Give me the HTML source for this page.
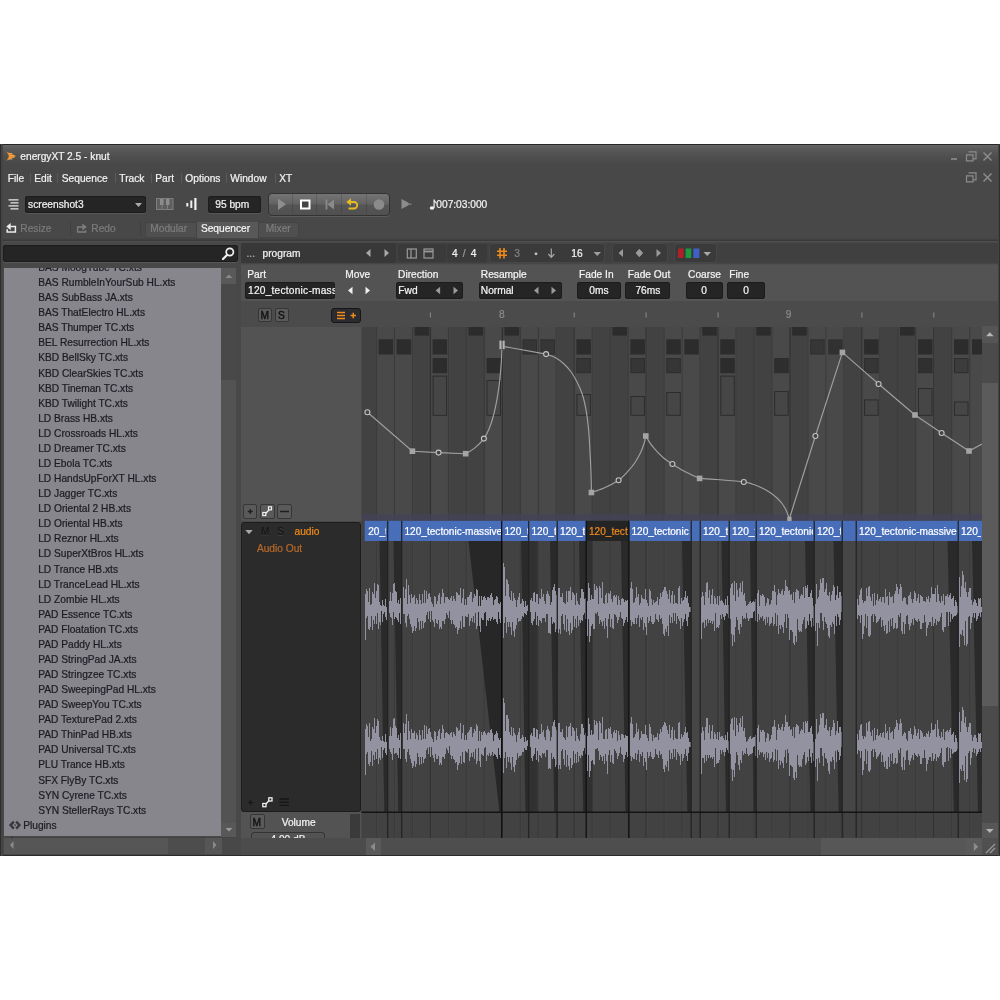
<!DOCTYPE html><html><head><meta charset="utf-8"><title>energyXT 2.5 - knut</title><style>
html,body{margin:0;padding:0;background:#fff;}
body{width:1000px;height:1000px;position:relative;overflow:hidden;font-family:"Liberation Sans",sans-serif;font-size:10.2px;}
div{position:absolute;box-sizing:border-box;}
.t{position:absolute;white-space:nowrap;line-height:12px;-webkit-text-stroke:.22px;}
svg{position:absolute;left:0;top:0;overflow:visible;}
.in{background:#252525;border-radius:3px;box-shadow:0 1px 0 #585858,0 0 0 1px #1c1c1c inset;}
.btn{background:#5a5a5a;border:1px solid #363636;border-radius:2px;}
</style></head><body>
<div id="w" style="left:0;top:0;width:1000px;height:1000px;will-change:transform"><div style="left:0px;top:144px;width:1000px;height:712.2px;background:#484848;"></div>
<div style="left:2px;top:145px;width:996px;height:23px;background:linear-gradient(#666 0,#5a5a5a 4px,#4f4f4f 11px,#484848 20px);"></div>
<div style="left:0px;top:144px;width:1000px;height:1px;background:#262626;"></div>
<div style="left:0px;top:854.8px;width:1000px;height:1.4px;background:#2b2b2b;"></div>
<div style="left:0px;top:144px;width:3px;height:711.7px;background:linear-gradient(90deg,#2e2e2e 0,#2e2e2e 1.2px,#444 1.3px,#444 100%);"></div>
<div style="left:997.5px;top:144px;width:2.5px;height:711.7px;background:linear-gradient(90deg,#444 0,#444 1.2px,#2e2e2e 1.3px,#2e2e2e 100%);"></div>
<span class="t" style="left:20.3px;top:150.8px;color:#f2f2f2;">energyXT 2.5 - knut</span>
<span class="t" style="left:7.8px;top:172.8px;color:#f2f2f2;">File</span>
<span class="t" style="left:34.3px;top:172.8px;color:#f2f2f2;">Edit</span>
<span class="t" style="left:61.8px;top:172.8px;color:#f2f2f2;">Sequence</span>
<span class="t" style="left:119.3px;top:172.8px;color:#f2f2f2;">Track</span>
<span class="t" style="left:155.3px;top:172.8px;color:#f2f2f2;">Part</span>
<span class="t" style="left:185.3px;top:172.8px;color:#f2f2f2;">Options</span>
<span class="t" style="left:230.3px;top:172.8px;color:#f2f2f2;">Window</span>
<span class="t" style="left:279.3px;top:172.8px;color:#f2f2f2;">XT</span>
<div style="left:29.5px;top:173px;width:1px;height:10px;background:#5a5a5a;"></div>
<div style="left:56.5px;top:173px;width:1px;height:10px;background:#5a5a5a;"></div>
<div style="left:114.5px;top:173px;width:1px;height:10px;background:#5a5a5a;"></div>
<div style="left:150.5px;top:173px;width:1px;height:10px;background:#5a5a5a;"></div>
<div style="left:180.5px;top:173px;width:1px;height:10px;background:#5a5a5a;"></div>
<div style="left:225.5px;top:173px;width:1px;height:10px;background:#5a5a5a;"></div>
<div style="left:274.5px;top:173px;width:1px;height:10px;background:#5a5a5a;"></div>
<div class="in" style="left:25px;top:196px;width:121px;height:16.5px;"></div>
<span class="t" style="left:28.1px;top:198.8px;color:#f2f2f2;">screenshot3</span>
<div class="in" style="left:208px;top:196px;width:53px;height:16.5px;"></div>
<span class="t" style="left:182.3px;top:198.8px;width:100px;text-align:center;color:#f0f0f0;">95 bpm</span>
<div style="left:268px;top:192.5px;width:122px;height:23px;border-radius:4px;border:1px solid #333;background:linear-gradient(#747474 0%,#636363 48%,#555 52%,#505050 100%);box-shadow:0 1px 0 #5c5c5c;"></div>
<div style="left:291.5px;top:194px;width:1px;height:20px;background:rgba(40,40,40,.22);"></div>
<div style="left:316px;top:194px;width:1px;height:20px;background:rgba(40,40,40,.22);"></div>
<div style="left:341px;top:194px;width:1px;height:20px;background:rgba(40,40,40,.22);"></div>
<div style="left:365.5px;top:194px;width:1px;height:20px;background:rgba(40,40,40,.22);"></div>
<span class="t" style="left:436.3px;top:198.8px;color:#f2f2f2;">007:03:000</span>
<span class="t" style="left:20.3px;top:222.8px;color:#7b7b7b;">Resize</span>
<div style="left:69.5px;top:222px;width:1px;height:14px;background:#404040;"></div>
<span class="t" style="left:91.3px;top:222.8px;color:#7b7b7b;">Redo</span>
<div style="left:139.5px;top:222px;width:1px;height:14px;background:#404040;"></div>
<div style="left:145px;top:221.5px;width:52px;height:16px;background:#4f4f4f;border:1px solid #444;border-radius:2px 0 0 2px;"></div>
<div style="left:197px;top:221.5px;width:60.5px;height:16px;background:#585858;"></div>
<div style="left:257.5px;top:221.5px;width:41.5px;height:16px;background:#4f4f4f;border:1px solid #444;border-radius:0 2px 2px 0;"></div>
<span class="t" style="left:150.3px;top:222.8px;color:#7d7d7d;">Modular</span>
<span class="t" style="left:200.9px;top:222.8px;color:#f4f4f4;">Sequencer</span>
<span class="t" style="left:265.8px;top:222.8px;color:#7d7d7d;">Mixer</span>
<div style="left:3px;top:238px;width:994.5px;height:3px;background:linear-gradient(#484848,#383838);"></div>
<div style="left:3px;top:241px;width:994.5px;height:1px;background:#4e4e4e;"></div>
<div class="in" style="left:3px;top:245px;width:234.5px;height:16.5px;"></div>
<div style="left:3.5px;top:267.6px;width:217.2px;height:568.9px;background:#87868d;overflow:hidden;"><span class="t" style="left:34.7px;top:-5.8px;color:#1c1c22;font-size:10.2px">BAS MoogTube TC.xts</span><span class="t" style="left:34.7px;top:9.2px;color:#1c1c22;font-size:10.2px">BAS RumbleInYourSub HL.xts</span><span class="t" style="left:34.7px;top:24.2px;color:#1c1c22;font-size:10.2px">BAS SubBass JA.xts</span><span class="t" style="left:34.7px;top:39.2px;color:#1c1c22;font-size:10.2px">BAS ThatElectro HL.xts</span><span class="t" style="left:34.7px;top:54.2px;color:#1c1c22;font-size:10.2px">BAS Thumper TC.xts</span><span class="t" style="left:34.7px;top:69.2px;color:#1c1c22;font-size:10.2px">BEL Resurrection HL.xts</span><span class="t" style="left:34.7px;top:84.2px;color:#1c1c22;font-size:10.2px">KBD BellSky TC.xts</span><span class="t" style="left:34.7px;top:100.2px;color:#1c1c22;font-size:10.2px">KBD ClearSkies TC.xts</span><span class="t" style="left:34.7px;top:115.2px;color:#1c1c22;font-size:10.2px">KBD Tineman TC.xts</span><span class="t" style="left:34.7px;top:130.2px;color:#1c1c22;font-size:10.2px">KBD Twilight TC.xts</span><span class="t" style="left:34.7px;top:145.2px;color:#1c1c22;font-size:10.2px">LD Brass HB.xts</span><span class="t" style="left:34.7px;top:160.2px;color:#1c1c22;font-size:10.2px">LD Crossroads HL.xts</span><span class="t" style="left:34.7px;top:175.2px;color:#1c1c22;font-size:10.2px">LD Dreamer TC.xts</span><span class="t" style="left:34.7px;top:190.2px;color:#1c1c22;font-size:10.2px">LD Ebola TC.xts</span><span class="t" style="left:34.7px;top:205.2px;color:#1c1c22;font-size:10.2px">LD HandsUpForXT HL.xts</span><span class="t" style="left:34.7px;top:220.2px;color:#1c1c22;font-size:10.2px">LD Jagger TC.xts</span><span class="t" style="left:34.7px;top:235.2px;color:#1c1c22;font-size:10.2px">LD Oriental 2 HB.xts</span><span class="t" style="left:34.7px;top:250.2px;color:#1c1c22;font-size:10.2px">LD Oriental HB.xts</span><span class="t" style="left:34.7px;top:265.2px;color:#1c1c22;font-size:10.2px">LD Reznor HL.xts</span><span class="t" style="left:34.7px;top:280.2px;color:#1c1c22;font-size:10.2px">LD SuperXtBros HL.xts</span><span class="t" style="left:34.7px;top:296.2px;color:#1c1c22;font-size:10.2px">LD Trance HB.xts</span><span class="t" style="left:34.7px;top:311.2px;color:#1c1c22;font-size:10.2px">LD TranceLead HL.xts</span><span class="t" style="left:34.7px;top:326.2px;color:#1c1c22;font-size:10.2px">LD Zombie HL.xts</span><span class="t" style="left:34.7px;top:341.2px;color:#1c1c22;font-size:10.2px">PAD Essence TC.xts</span><span class="t" style="left:34.7px;top:356.2px;color:#1c1c22;font-size:10.2px">PAD Floatation TC.xts</span><span class="t" style="left:34.7px;top:371.2px;color:#1c1c22;font-size:10.2px">PAD Paddy HL.xts</span><span class="t" style="left:34.7px;top:386.2px;color:#1c1c22;font-size:10.2px">PAD StringPad JA.xts</span><span class="t" style="left:34.7px;top:401.2px;color:#1c1c22;font-size:10.2px">PAD Stringzee TC.xts</span><span class="t" style="left:34.7px;top:416.2px;color:#1c1c22;font-size:10.2px">PAD SweepingPad HL.xts</span><span class="t" style="left:34.7px;top:431.2px;color:#1c1c22;font-size:10.2px">PAD SweepYou TC.xts</span><span class="t" style="left:34.7px;top:446.2px;color:#1c1c22;font-size:10.2px">PAD TexturePad 2.xts</span><span class="t" style="left:34.7px;top:461.2px;color:#1c1c22;font-size:10.2px">PAD ThinPad HB.xts</span><span class="t" style="left:34.7px;top:476.2px;color:#1c1c22;font-size:10.2px">PAD Universal TC.xts</span><span class="t" style="left:34.7px;top:491.2px;color:#1c1c22;font-size:10.2px">PLU Trance HB.xts</span><span class="t" style="left:34.7px;top:507.2px;color:#1c1c22;font-size:10.2px">SFX FlyBy TC.xts</span><span class="t" style="left:34.7px;top:522.2px;color:#1c1c22;font-size:10.2px">SYN Cyrene TC.xts</span><span class="t" style="left:34.7px;top:537.2px;color:#1c1c22;font-size:10.2px">SYN StellerRays TC.xts</span><span class="t" style="left:19.7px;top:552.2px;color:#1c1c22;font-size:10.2px">Plugins</span></div>
<div style="left:221.2px;top:268px;width:15.3px;height:568.5px;background:#535353;"></div>
<div style="left:221.2px;top:268px;width:15.3px;height:15.5px;background:#595959;"></div>
<div style="left:221.2px;top:284px;width:15.3px;height:95.5px;background:#494949;"></div>
<div style="left:221.2px;top:822.5px;width:15.3px;height:14px;background:#585858;"></div>
<div style="left:3.5px;top:837px;width:218px;height:17.3px;background:#565656;"></div>
<div style="left:168px;top:837px;width:37px;height:17.3px;background:#4d4d4d;"></div>
<div style="left:3.5px;top:836.5px;width:233px;height:1px;background:#444;"></div>
<div style="left:241px;top:242.6px;width:756.5px;height:20.4px;background:#404040;"></div>
<div style="left:241px;top:243.3px;width:155px;height:19.3px;background:#383838;border-radius:2px;"></div>
<div style="left:398px;top:244px;width:48px;height:18.3px;background:#3a3a3a;border-radius:3px;"></div>
<div style="left:447px;top:244px;width:40px;height:18.3px;background:#3a3a3a;border-radius:3px;"></div>
<div style="left:490px;top:244px;width:114px;height:18.3px;background:#3a3a3a;border-radius:3px;box-shadow:0 0 0 1px #474747;"></div>
<div style="left:612.5px;top:244px;width:54px;height:18.3px;background:#3a3a3a;border-radius:3px;box-shadow:0 0 0 1px #474747;"></div>
<div style="left:675px;top:244px;width:40.5px;height:18.3px;background:#3a3a3a;border-radius:3px;box-shadow:0 0 0 1px #474747;"></div>
<span class="t" style="left:246.5px;top:247.8px;color:#b0b0b0;">...</span>
<span class="t" style="left:262.5px;top:247.8px;color:#f2f2f2;">program</span>
<span class="t" style="left:452px;top:247.8px;color:#f2f2f2;">4</span>
<span class="t" style="left:462.8px;top:247.8px;color:#9a9a9a;">/</span>
<span class="t" style="left:470.8px;top:247.8px;color:#f2f2f2;">4</span>
<span class="t" style="left:514.3px;top:247.8px;color:#808080;">3</span>
<span class="t" style="left:571.3px;top:247.8px;color:#f2f2f2;">16</span>
<div style="left:241px;top:263px;width:756.5px;height:38.5px;background:#535353;"></div>
<div style="left:241px;top:262.5px;width:756.5px;height:2.5px;background:linear-gradient(#424242,#535353);"></div>
<span class="t" style="left:247.3px;top:268.8px;color:#f4f4f4;">Part</span>
<span class="t" style="left:345.3px;top:268.8px;color:#f4f4f4;">Move</span>
<span class="t" style="left:398.1px;top:268.8px;color:#f4f4f4;">Direction</span>
<span class="t" style="left:480.8px;top:268.8px;color:#f4f4f4;">Resample</span>
<span class="t" style="left:579px;top:268.8px;color:#f4f4f4;">Fade In</span>
<span class="t" style="left:627.8px;top:268.8px;color:#f4f4f4;">Fade Out</span>
<span class="t" style="left:688.1px;top:268.8px;color:#f4f4f4;">Coarse</span>
<span class="t" style="left:729.3px;top:268.8px;color:#f4f4f4;">Fine</span>
<div class="in" style="left:245.3px;top:281.5px;width:89.7px;height:17px;"></div>
<div style="left:247.500px;top:282px;width:87px;height:15px;overflow:hidden"><span class="t" style="left:.5px;top:2.800px;color:#f4f4f4;letter-spacing:.22px">120_tectonic-massive</span></div>
<div class="in" style="left:395.6px;top:281.5px;width:67.7px;height:17px;"></div>
<span class="t" style="left:398.3px;top:284.8px;color:#f4f4f4;">Fwd</span>
<div class="in" style="left:478.5px;top:281.5px;width:83px;height:17px;"></div>
<span class="t" style="left:480.8px;top:284.8px;color:#f4f4f4;">Normal</span>
<div class="in" style="left:576.5px;top:281.5px;width:44.8px;height:17px;"></div>
<span class="t" style="left:548.9px;top:284.8px;width:100px;text-align:center;color:#f4f4f4;">0ms</span>
<div class="in" style="left:625.3px;top:281.5px;width:45.1px;height:17px;"></div>
<span class="t" style="left:597.9px;top:284.8px;width:100px;text-align:center;color:#f4f4f4;">76ms</span>
<div class="in" style="left:685.6px;top:281.5px;width:37.1px;height:17px;"></div>
<span class="t" style="left:654.2px;top:284.8px;width:100px;text-align:center;color:#f4f4f4;">0</span>
<div class="in" style="left:727.2px;top:281.5px;width:37.6px;height:17px;"></div>
<span class="t" style="left:696px;top:284.8px;width:100px;text-align:center;color:#f4f4f4;">0</span>
<div style="left:241px;top:301px;width:120.5px;height:220px;background:#535353;"></div>
<div style="left:241px;top:301px;width:756.5px;height:25.7px;background:#4b4b4b;"></div>
<div class="btn" style="left:258.4px;top:308.4px;width:14px;height:14px;"></div>
<div class="btn" style="left:275px;top:308.4px;width:14px;height:14px;"></div>
<span class="t" style="left:260.5px;top:309.8px;color:#141414;-webkit-text-stroke:.45px;">M</span>
<span class="t" style="left:278px;top:309.8px;color:#141414;-webkit-text-stroke:.45px;">S</span>
<div style="left:331.3px;top:307.8px;width:30px;height:15px;background:#2b2b30;border-radius:3px;border:1.2px solid #161616;"></div>
<span class="t" style="left:451.8px;top:308.8px;width:100px;text-align:center;color:#8a8a8a;">8</span>
<span class="t" style="left:738.5px;top:308.8px;width:100px;text-align:center;color:#8a8a8a;">9</span>
<div class="btn" style="left:243.2px;top:504.4px;width:14.3px;height:14.3px;"></div>
<div class="btn" style="left:260.3px;top:504.4px;width:14.3px;height:14.3px;"></div>
<div class="btn" style="left:277.3px;top:504.4px;width:14.3px;height:14.3px;"></div>
<div style="left:241px;top:521.7px;width:120.2px;height:290px;background:#2b2b2b;border-radius:3px;border:1px solid #1c1c1c;"></div>
<span class="t" style="left:260.9px;top:525.8px;color:#151515;text-shadow:0 1px 0 #444;">M</span>
<span class="t" style="left:277.3px;top:525.8px;color:#151515;text-shadow:0 1px 0 #444;">S</span>
<span class="t" style="left:294.5px;top:525.8px;color:#ef8a1c;">audio</span>
<span class="t" style="left:256.9px;top:542.8px;color:#b4692a;">Audio Out</span>
<div style="left:241px;top:812px;width:120.5px;height:26.4px;background:#535353;overflow:hidden;"><div class="btn" style="left:9.400px;top:2.400px;width:15px;height:14.600px"></div><div style="left:9.700px;top:19.500px;width:74.600px;height:14px;background:#535353;border:1px solid #333;border-radius:3px"></div><span class="t" style="left:27px;top:22.300px;width:40px;text-align:center;color:#f4f4f4">4.00 dB</span><div style="left:108.600px;top:2.400px;width:10.400px;height:24px;background:#3a3a3a"></div></div>
<span class="t" style="left:252.6px;top:816.8px;color:#141414;-webkit-text-stroke:.45px;">M</span>
<span class="t" style="left:281.7px;top:816.8px;color:#f4f4f4;">Volume</span>
<div style="left:982px;top:327px;width:15.5px;height:511px;background:#4b4b4b;"></div>
<div style="left:982px;top:326px;width:15.5px;height:17px;background:#555;"></div>
<div style="left:982px;top:383px;width:15.5px;height:323px;background:#5b5b5b;"></div>
<div style="left:982px;top:823px;width:15.5px;height:15px;background:#575757;"></div>
<div style="left:241px;top:838.4px;width:756.5px;height:16.3px;background:#4c4c4c;"></div>
<div style="left:365.5px;top:838.4px;width:15px;height:16.3px;background:#5a5a5a;"></div>
<div style="left:380.5px;top:838.4px;width:586px;height:16.3px;background:#4e4e4e;"></div>
<div style="left:821px;top:838.4px;width:145px;height:16.3px;background:#575757;"></div>
<div style="left:966px;top:838.4px;width:16px;height:16.3px;background:#5a5a5a;"></div>
<div style="left:982px;top:838.4px;width:15.5px;height:16.3px;background:#505050;"></div>
<svg width="1000" height="1000" viewBox="0 0 1000 1000"><path d="M6.500 151.600L16.200 156.200L6.500 160.800L8.800 156.200z" fill="#e07a18"/><path d="M8.300 153.600h4M9 155.400h5.500M9 157.200h5.500M8.300 159h4" stroke="#f8c070" stroke-width=".8"/>
<g stroke="#8c8c8c" fill="none" stroke-width="1.2"><path d="M951 159h6" stroke-width="1.6"/><path d="M968.5 151.8h7.5v7h-2.5M966.5 154.800h6.500v6h-6.500z"/><path d="M983.5 152.500l8 8m0-8l-8 8" stroke-width="1.5"/><path d="M968.5 172.800h7.500v7h-2.500M966.500 175.800h6.500v6h-6.500z"/><path d="M983.500 173.500l8 8m0-8l-8 8" stroke-width="1.500"/></g>
<g stroke="#e8e8e8" stroke-width="1.3"><path d="M8.500 199.800h10M10.500 202.800h8M8.500 205.800h10M10.500 208.800h8"/></g>
<path d="M135 203h7l-3.500 4z" fill="#aaa"/>
<g><rect x="156.500" y="198.500" width="16.500" height="11" fill="#5e5e5e" stroke="#7e7e7e"/><path d="M162 199v10.500M167.500 199v10.500" stroke="#7e7e7e"/><rect x="160" y="199" width="3.500" height="6" fill="#8c8c8c"/><rect x="166" y="199" width="3.500" height="6" fill="#8c8c8c"/></g>
<g fill="#f0f0f0"><rect x="186.300" y="203" width="2" height="3.500"/><rect x="190.300" y="200.500" width="2" height="7.500"/><rect x="194.300" y="198" width="2.200" height="12"/></g>
<path d="M278 198.500l8 5.800-8 5.800z" fill="#8e8e8e"/>
<rect x="301" y="200.500" width="8.500" height="8" fill="#444" stroke="#fff" stroke-width="2"/>
<path d="M326.500 199.500v10" stroke="#8a8a8a" stroke-width="1.800"/><path d="M334 199.500v10l-6.500-5z" fill="#8a8a8a"/>
<g stroke="#e9bb22" stroke-width="1.800" fill="none"><path d="M350 202h4a3.200 3.200 0 0 1 0 6.500h-5.500"/></g><path d="M346.300 202l4.700-3.700v7.400z" fill="#e9bb22"/>
<circle cx="379" cy="204.500" r="5.300" fill="#8a8a8a"/>
<path d="M401.500 199l7.500 4v2l-7.500 4z" fill="#8c8c8c"/><path d="M408 203.500h3.500v1.500h-3.500z" fill="#7a7a7a"/>
<g fill="#f0f0f0"><ellipse cx="432" cy="208" rx="2.300" ry="1.800"/><path d="M433.500 199.500h1.200v8.500h-1.200z"/><path d="M434 199.500c1 1.500 2.500 2 2.800 4l-.9.300c-.3-1.300-1.200-1.800-1.900-2z"/></g>
<g stroke="#ececec" stroke-width="1.500" fill="none"><path d="M10 226.600h5.400v5.300h-8.200v-2.600"/></g><path d="M6.300 226.600l4.400-3.600v7.200z" fill="#ececec"/>
<g stroke="#7e7e7e" stroke-width="1.400" fill="none"><path d="M80.500 227h-2.900v5h8v-1.800M80 227h3"/></g><path d="M82.400 223.600l4.300 3.400-4.300 3.400z" fill="#7e7e7e"/>
<g stroke="#f2f2f2" fill="none"><circle cx="229.800" cy="252" r="3.600" stroke-width="1.700"/><path d="M227 255l-4 4" stroke-width="2.200" stroke-linecap="round"/></g>
<g stroke="#37373d" stroke-width="2.300" fill="none"><path d="M13.800 821.600l-3.300 3.500 3.300 3.500M16.200 821.600l3.300 3.500-3.300 3.500"/></g><circle cx="15" cy="825.100" r="1.100" fill="#55555c"/>
<g stroke="#3a3a42" stroke-width="1.600" fill="none"><path d="M13 836.500l-2 2"/></g>
<path d="M225.500 278l3.500-3.500 3.500 3.500z" fill="#8a8a8a"/><path d="M225.500 828l3.500 3.500 3.500-3.500z" fill="#9a9a9a"/>
<path d="M13.500 841l-3.500 4 3.500 4z" fill="#8a8a8a"/><path d="M213 841l3.500 4-3.500 4z" fill="#8a8a8a"/>
<path d="M366 253l4.5 -4v8z" fill="#a8a8a8"/>
<path d="M389 253l-4.5 -4v8z" fill="#a8a8a8"/>
<g stroke="#9a9a9a" fill="none" stroke-width="1.200"><rect x="407.300" y="249" width="9" height="9"/><path d="M411 249v9"/><rect x="424" y="249" width="9" height="9"/><path d="M424 251.500h9" stroke-width="1.800"/></g>
<g stroke="#ef8a1c" stroke-width="1.600"><path d="M500 248v10.500M504 248v10.500M497 251.300h10M497 255.300h10"/></g>
<circle cx="536" cy="253.800" r="1.400" fill="#c8c8c8"/>
<g stroke="#a8a8a8" stroke-width="1.200" fill="none"><path d="M551.300 248.500v8.500M548.300 254l3 3.300 3-3.300"/></g>
<path d="M593.500 252h7.500l-3.750 4z" fill="#a0a0a0"/>
<path d="M618.5 253l4.5 -4v8z" fill="#9a9a9a"/>
<path d="M661 253l-4.5 -4v8z" fill="#9a9a9a"/>
<path d="M639.300 249.300l3.300 3.700-3.300 3.700-3.300-3.700z" fill="#9a9a9a" stroke="#9a9a9a" stroke-linejoin="round"/>
<rect x="678" y="248.500" width="5.600" height="9.500" fill="#b02028"/><rect x="685.600" y="248.500" width="5.600" height="9.500" fill="#1c9a40"/><rect x="693.400" y="248.500" width="6" height="9.500" fill="#4060c8"/>
<path d="M703.500 252h7.500l-3.750 4z" fill="#a8a8a8"/>
<path d="M348 290.5l4.5 -3.8v7.6z" fill="#f0f0f0"/>
<path d="M370 290.5l-4.5 -3.8v7.6z" fill="#f0f0f0"/>
<path d="M435.6 290.5l4.5 -3.8v7.6z" fill="#9a9a9a"/>
<path d="M458 290.5l-4.5 -3.8v7.6z" fill="#9a9a9a"/>
<path d="M534 290.5l4.5 -3.8v7.6z" fill="#9a9a9a"/>
<path d="M556 290.5l-4.5 -3.8v7.6z" fill="#9a9a9a"/>
<g stroke="#ef8a1c" stroke-width="1.500"><path d="M337 312.600h8M337 315.500h8M337 318.400h8M350.500 315.500h5.500M353.250 312.800v5.500"/></g>
<defs><clipPath id="lane"><rect x="361.3" y="327" width="620.7" height="511"/></clipPath></defs>
<g clip-path="url(#lane)">
<rect x="361.3" y="327" width="620.7" height="511" fill="#424242"/>
<rect x="376.4" y="327" width="17.98" height="193.8" fill="#494949"/>
<rect x="394.4" y="327" width="17.98" height="193.8" fill="#494949"/>
<rect x="430.4" y="327" width="17.98" height="193.8" fill="#494949"/>
<rect x="484.3" y="327" width="17.98" height="193.8" fill="#494949"/>
<rect x="520.3" y="327" width="17.98" height="193.8" fill="#494949"/>
<rect x="538.3" y="327" width="17.98" height="193.8" fill="#494949"/>
<rect x="574.2" y="327" width="17.98" height="193.8" fill="#494949"/>
<rect x="628.2" y="327" width="17.98" height="193.8" fill="#494949"/>
<rect x="664.1" y="327" width="17.98" height="193.8" fill="#494949"/>
<rect x="682.1" y="327" width="17.98" height="193.8" fill="#494949"/>
<rect x="718.1" y="327" width="17.98" height="193.8" fill="#494949"/>
<rect x="772.0" y="327" width="17.98" height="193.8" fill="#494949"/>
<rect x="808.0" y="327" width="17.98" height="193.8" fill="#494949"/>
<rect x="825.9" y="327" width="17.98" height="193.8" fill="#494949"/>
<rect x="861.9" y="327" width="17.98" height="193.8" fill="#494949"/>
<rect x="915.8" y="327" width="17.98" height="193.8" fill="#494949"/>
<rect x="951.8" y="327" width="17.98" height="193.8" fill="#494949"/>
<rect x="969.8" y="327" width="17.98" height="193.8" fill="#494949"/>
<rect x="358.0" y="327" width="1" height="511" fill="#2f2f2f"/>
<rect x="359.0" y="327" width="1" height="511" fill="#484848" opacity=".6"/>
<rect x="375.9" y="327" width="1" height="511" fill="#3a3a3a"/>
<rect x="376.9" y="327" width="1" height="511" fill="#484848" opacity=".6"/>
<rect x="393.9" y="327" width="1" height="511" fill="#3a3a3a"/>
<rect x="394.9" y="327" width="1" height="511" fill="#484848" opacity=".6"/>
<rect x="411.9" y="327" width="1" height="511" fill="#3a3a3a"/>
<rect x="412.9" y="327" width="1" height="511" fill="#484848" opacity=".6"/>
<rect x="429.9" y="327" width="1" height="511" fill="#2f2f2f"/>
<rect x="430.9" y="327" width="1" height="511" fill="#484848" opacity=".6"/>
<rect x="447.9" y="327" width="1" height="511" fill="#3a3a3a"/>
<rect x="448.9" y="327" width="1" height="511" fill="#484848" opacity=".6"/>
<rect x="465.8" y="327" width="1" height="511" fill="#3a3a3a"/>
<rect x="466.8" y="327" width="1" height="511" fill="#484848" opacity=".6"/>
<rect x="483.8" y="327" width="1" height="511" fill="#3a3a3a"/>
<rect x="484.8" y="327" width="1" height="511" fill="#484848" opacity=".6"/>
<rect x="501.8" y="327" width="1" height="511" fill="#2a2a2a"/>
<rect x="502.8" y="327" width="1" height="511" fill="#484848" opacity=".6"/>
<rect x="519.8" y="327" width="1" height="511" fill="#3a3a3a"/>
<rect x="520.8" y="327" width="1" height="511" fill="#484848" opacity=".6"/>
<rect x="537.8" y="327" width="1" height="511" fill="#3a3a3a"/>
<rect x="538.8" y="327" width="1" height="511" fill="#484848" opacity=".6"/>
<rect x="555.7" y="327" width="1" height="511" fill="#3a3a3a"/>
<rect x="556.7" y="327" width="1" height="511" fill="#484848" opacity=".6"/>
<rect x="573.7" y="327" width="1" height="511" fill="#2f2f2f"/>
<rect x="574.7" y="327" width="1" height="511" fill="#484848" opacity=".6"/>
<rect x="591.7" y="327" width="1" height="511" fill="#3a3a3a"/>
<rect x="592.7" y="327" width="1" height="511" fill="#484848" opacity=".6"/>
<rect x="609.7" y="327" width="1" height="511" fill="#3a3a3a"/>
<rect x="610.7" y="327" width="1" height="511" fill="#484848" opacity=".6"/>
<rect x="627.7" y="327" width="1" height="511" fill="#3a3a3a"/>
<rect x="628.7" y="327" width="1" height="511" fill="#484848" opacity=".6"/>
<rect x="645.6" y="327" width="1" height="511" fill="#2f2f2f"/>
<rect x="646.6" y="327" width="1" height="511" fill="#484848" opacity=".6"/>
<rect x="663.6" y="327" width="1" height="511" fill="#3a3a3a"/>
<rect x="664.6" y="327" width="1" height="511" fill="#484848" opacity=".6"/>
<rect x="681.6" y="327" width="1" height="511" fill="#3a3a3a"/>
<rect x="682.6" y="327" width="1" height="511" fill="#484848" opacity=".6"/>
<rect x="699.6" y="327" width="1" height="511" fill="#3a3a3a"/>
<rect x="700.6" y="327" width="1" height="511" fill="#484848" opacity=".6"/>
<rect x="717.6" y="327" width="1" height="511" fill="#2f2f2f"/>
<rect x="718.6" y="327" width="1" height="511" fill="#484848" opacity=".6"/>
<rect x="735.5" y="327" width="1" height="511" fill="#3a3a3a"/>
<rect x="736.5" y="327" width="1" height="511" fill="#484848" opacity=".6"/>
<rect x="753.5" y="327" width="1" height="511" fill="#3a3a3a"/>
<rect x="754.5" y="327" width="1" height="511" fill="#484848" opacity=".6"/>
<rect x="771.5" y="327" width="1" height="511" fill="#3a3a3a"/>
<rect x="772.5" y="327" width="1" height="511" fill="#484848" opacity=".6"/>
<rect x="789.5" y="327" width="1" height="511" fill="#2a2a2a"/>
<rect x="790.5" y="327" width="1" height="511" fill="#484848" opacity=".6"/>
<rect x="807.5" y="327" width="1" height="511" fill="#3a3a3a"/>
<rect x="808.5" y="327" width="1" height="511" fill="#484848" opacity=".6"/>
<rect x="825.4" y="327" width="1" height="511" fill="#3a3a3a"/>
<rect x="826.4" y="327" width="1" height="511" fill="#484848" opacity=".6"/>
<rect x="843.4" y="327" width="1" height="511" fill="#3a3a3a"/>
<rect x="844.4" y="327" width="1" height="511" fill="#484848" opacity=".6"/>
<rect x="861.4" y="327" width="1" height="511" fill="#2f2f2f"/>
<rect x="862.4" y="327" width="1" height="511" fill="#484848" opacity=".6"/>
<rect x="879.4" y="327" width="1" height="511" fill="#3a3a3a"/>
<rect x="880.4" y="327" width="1" height="511" fill="#484848" opacity=".6"/>
<rect x="897.4" y="327" width="1" height="511" fill="#3a3a3a"/>
<rect x="898.4" y="327" width="1" height="511" fill="#484848" opacity=".6"/>
<rect x="915.3" y="327" width="1" height="511" fill="#3a3a3a"/>
<rect x="916.3" y="327" width="1" height="511" fill="#484848" opacity=".6"/>
<rect x="933.3" y="327" width="1" height="511" fill="#2f2f2f"/>
<rect x="934.3" y="327" width="1" height="511" fill="#484848" opacity=".6"/>
<rect x="951.3" y="327" width="1" height="511" fill="#3a3a3a"/>
<rect x="952.3" y="327" width="1" height="511" fill="#484848" opacity=".6"/>
<rect x="969.3" y="327" width="1" height="511" fill="#3a3a3a"/>
<rect x="970.3" y="327" width="1" height="511" fill="#484848" opacity=".6"/>
<rect x="987.3" y="327" width="1" height="511" fill="#3a3a3a"/>
<rect x="988.3" y="327" width="1" height="511" fill="#484848" opacity=".6"/>
<rect x="414.6" y="326.0" width="14.5" height="9.6" fill="#2c2c2c"/>
<rect x="468.5" y="326.0" width="14.5" height="9.6" fill="#2c2c2c"/>
<rect x="504.5" y="326.0" width="14.5" height="9.6" fill="#2c2c2c"/>
<rect x="612.4" y="326.0" width="14.5" height="9.6" fill="#2c2c2c"/>
<rect x="702.3" y="326.0" width="14.5" height="9.6" fill="#2c2c2c"/>
<rect x="756.2" y="326.0" width="14.5" height="9.6" fill="#2c2c2c"/>
<rect x="792.2" y="326.0" width="14.5" height="9.6" fill="#2c2c2c"/>
<rect x="900.1" y="326.0" width="14.5" height="9.6" fill="#2c2c2c"/>
<rect x="378.6" y="339.3" width="14.5" height="15.2" fill="#2c2c2c"/>
<rect x="396.6" y="339.3" width="14.5" height="15.2" fill="#2c2c2c"/>
<rect x="432.6" y="339.3" width="14.5" height="15.2" fill="#2c2c2c"/>
<rect x="523.0" y="339.8" width="13.5" height="14.2" fill="#363636" stroke="#2f2f2f" stroke-width="1"/>
<rect x="541.0" y="339.8" width="13.5" height="14.2" fill="#363636" stroke="#2f2f2f" stroke-width="1"/>
<rect x="576.4" y="339.3" width="14.5" height="15.2" fill="#2c2c2c"/>
<rect x="630.4" y="339.3" width="14.5" height="15.2" fill="#2c2c2c"/>
<rect x="666.3" y="339.3" width="14.5" height="15.2" fill="#2c2c2c"/>
<rect x="684.3" y="339.3" width="14.5" height="15.2" fill="#2c2c2c"/>
<rect x="720.3" y="339.3" width="14.5" height="15.2" fill="#2c2c2c"/>
<rect x="810.7" y="339.8" width="13.5" height="14.2" fill="#363636" stroke="#2f2f2f" stroke-width="1"/>
<rect x="828.1" y="339.3" width="14.5" height="15.2" fill="#313131"/>
<rect x="864.1" y="339.3" width="14.5" height="15.2" fill="#2c2c2c"/>
<rect x="918.0" y="339.3" width="14.5" height="15.2" fill="#2c2c2c"/>
<rect x="954.0" y="339.3" width="14.5" height="15.2" fill="#2c2c2c"/>
<rect x="972.0" y="339.3" width="14.5" height="15.2" fill="#2c2c2c"/>
<rect x="432.6" y="358.0" width="14.5" height="15.2" fill="#2c2c2c"/>
<rect x="486.5" y="358.0" width="14.5" height="15.2" fill="#2c2c2c"/>
<rect x="576.9" y="358.5" width="13.5" height="14.2" fill="#363636" stroke="#2d2d2d" stroke-width="1"/>
<rect x="630.9" y="358.5" width="13.5" height="14.2" fill="#363636" stroke="#2d2d2d" stroke-width="1"/>
<rect x="666.8" y="358.5" width="13.5" height="14.2" fill="#363636" stroke="#2d2d2d" stroke-width="1"/>
<rect x="720.3" y="358.0" width="14.5" height="15.2" fill="#2c2c2c"/>
<rect x="774.7" y="358.5" width="13.5" height="14.2" fill="#2e2e2e" stroke="#2d2d2d" stroke-width="1"/>
<rect x="864.6" y="358.5" width="13.5" height="14.2" fill="#363636" stroke="#2d2d2d" stroke-width="1"/>
<rect x="918.5" y="358.5" width="13.5" height="14.2" fill="#303030" stroke="#2d2d2d" stroke-width="1"/>
<rect x="954.5" y="358.5" width="13.5" height="14.2" fill="#3c3c3c" stroke="#2d2d2d" stroke-width="1"/>
<rect x="433.1" y="376.1" width="13.5" height="39.2" fill="#464646" stroke="#2c2c2c" stroke-width="1"/>
<rect x="487.0" y="380.5" width="13.5" height="34.8" fill="#464646" stroke="#2c2c2c" stroke-width="1"/>
<rect x="576.9" y="394.5" width="13.5" height="20.8" fill="#464646" stroke="#2c2c2c" stroke-width="1"/>
<rect x="630.9" y="396.5" width="13.5" height="18.8" fill="#464646" stroke="#2c2c2c" stroke-width="1"/>
<rect x="666.8" y="392.5" width="13.5" height="22.8" fill="#464646" stroke="#2c2c2c" stroke-width="1"/>
<rect x="720.8" y="376.1" width="13.5" height="39.2" fill="#464646" stroke="#2c2c2c" stroke-width="1"/>
<rect x="774.7" y="391.5" width="13.5" height="23.8" fill="#464646" stroke="#2c2c2c" stroke-width="1"/>
<rect x="864.6" y="399.9" width="13.5" height="15.4" fill="#464646" stroke="#2c2c2c" stroke-width="1"/>
<rect x="918.5" y="388.5" width="13.5" height="26.8" fill="#464646" stroke="#2c2c2c" stroke-width="1"/>
<rect x="954.5" y="402.0" width="13.5" height="13.3" fill="#464646" stroke="#2c2c2c" stroke-width="1"/>
<rect x="361.3" y="514" width="620.7" height="6.800" fill="#43435a" opacity=".7"/>
<path d="M379.5 541L387.5 541L387.5 812L384.3 812z" fill="#292929" opacity=".95"/>
<path d="M393.5 541L401.5 541L401.5 812L398.3 812z" fill="#292929" opacity=".95"/>
<path d="M468.5 541L501.5 541L501.5 812L499.5 812z" fill="#272727"/>
<path d="M521 541L528.5 541L528.5 812L525.5 812z" fill="#292929" opacity=".95"/>
<path d="M550 541L557 541L557 812L554.2 812z" fill="#292929" opacity=".95"/>
<path d="M579 541L586 541L586 812L583.2 812z" fill="#292929" opacity=".95"/>
<path d="M621 541L628.5 541L628.5 812L625.5 812z" fill="#292929" opacity=".95"/>
<path d="M682 541L691 541L691 812L687.4 812z" fill="#292929" opacity=".95"/>
<rect x="691.5" y="541" width="8.5" height="271" fill="#464646"/>
<path d="M721.5 541L729 541L729 812L726 812z" fill="#292929" opacity=".95"/>
<path d="M750 541L756 541L756 812L753.6 812z" fill="#292929" opacity=".95"/>
<path d="M805 541L814 541L814 812L810.4 812z" fill="#292929" opacity=".95"/>
<path d="M833.5 541L842 541L842 812L838.6 812z" fill="#292929" opacity=".95"/>
<rect x="842.5" y="541" width="13.5" height="271" fill="#464646"/>
<path d="M947.5 541L958 541L958 812L953.8 812z" fill="#292929" opacity=".95"/>
<path d="M972 541L982 541L982 812L978 812z" fill="#292929" opacity=".95"/>
<rect x="529" y="541" width="8.5" height="271" fill="#2c2c2c" opacity=".75"/>
<rect x="587" y="541" width="5.5" height="271" fill="#2c2c2c" opacity=".75"/>
<path d="M365.5 594V640M366.5 589V618M367.5 591V616M368.5 602V629M369.5 588V630M370.5 605V627M371.5 604V616M372.5 592V630M373.5 594V620M374.5 583V624M375.5 598V616M376.5 591V624M377.5 584V613M378.5 585V629M379.5 602V622M380.5 605V625M381.5 606V611M382.5 600V622M383.5 605V614M384.5 606V612M385.5 599V617M386.5 607V620M389.5 601V613M390.5 592V617M391.5 601V618M392.5 593V625M393.5 584V612M394.5 583V619M395.5 591V617M396.5 592V618M397.5 603V620M398.5 600V622M399.5 604V613M400.5 598V624M403.5 587V614M404.5 598V614M405.5 589V623M406.5 579V627M407.5 604V616M408.5 585V614M409.5 595V619M410.5 603V624M411.5 594V627M412.5 598V633M413.5 597V631M414.5 595V626M415.5 604V631M416.5 598V628M417.5 600V618M418.5 604V622M419.5 594V630M420.5 600V621M421.5 604V629M422.5 594V621M423.5 603V628M424.5 590V623M425.5 603V622M426.5 591V615M427.5 599V612M428.5 594V619M429.5 593V611M430.5 597V622M431.5 602V611M432.5 604V620M433.5 607V622M434.5 596V627M435.5 597V619M436.5 604V623M437.5 601V624M438.5 595V620M439.5 593V629M440.5 604V627M441.5 597V629M442.5 589V621M443.5 593V621M444.5 603V624M445.5 597V619M446.5 597V613M447.5 597V615M448.5 599V618M449.5 600V611M450.5 598V620M451.5 596V624M452.5 601V620M453.5 596V624M454.5 599V625M455.5 601V628M456.5 592V627M457.5 593V634M458.5 595V630M459.5 595V628M460.5 588V621M461.5 603V629M462.5 598V616M463.5 589V627M464.5 605V627M465.5 599V616M466.5 605V617M467.5 597V617M468.5 597V614M469.5 595V626M470.5 592V621M471.5 592V618M472.5 602V622M473.5 598V616M474.5 594V623M475.5 596V613M476.5 589V629M477.5 590V626M478.5 606V612M479.5 596V626M480.5 606V632M481.5 596V618M482.5 600V620M483.5 597V620M484.5 596V613M485.5 598V612M486.5 600V626M487.5 597V620M488.5 597V621M489.5 598V618M490.5 595V621M491.5 593V619M492.5 597V617M493.5 605V620M494.5 600V619M495.5 599V619M496.5 596V622M497.5 597V624M498.5 603V612M499.5 604V619M500.5 602V623M503.5 563V638M504.5 567V623M505.5 596V617M506.5 579V633M507.5 580V622M508.5 584V627M509.5 597V622M510.5 600V627M511.5 591V635M512.5 601V622M513.5 593V631M514.5 598V637M515.5 600V629M516.5 607V625M517.5 600V618M518.5 597V622M519.5 593V621M520.5 604V621M521.5 603V619M522.5 599V616M523.5 601V617M524.5 607V613M525.5 601V614M526.5 606V615M527.5 605V611M530.5 600V612M531.5 598V623M532.5 601V625M533.5 593V621M534.5 592V619M535.5 602V612M536.5 594V625M537.5 594V616M538.5 604V626M539.5 598V620M540.5 599V621M541.5 589V623M542.5 597V618M543.5 594V618M544.5 601V618M545.5 604V622M546.5 594V614M547.5 591V614M548.5 594V633M549.5 596V633M550.5 605V634M551.5 602V617M552.5 590V624M553.5 587V622M554.5 584V623M555.5 591V632M556.5 595V629M558.5 588V633M559.5 588V629M560.5 597V634M561.5 597V616M562.5 593V614M563.5 602V624M564.5 603V630M565.5 604V615M566.5 591V632M567.5 602V619M568.5 591V631M569.5 591V635M570.5 587V623M571.5 600V633M572.5 592V630M573.5 593V616M574.5 595V627M575.5 605V619M576.5 593V628M577.5 601V616M578.5 604V626M579.5 605V620M580.5 598V623M581.5 589V620M582.5 589V621M583.5 592V615M584.5 599V613M585.5 598V619M587.5 601V636M588.5 583V619M589.5 588V642M590.5 600V636M591.5 595V626M592.5 599V624M593.5 599V629M594.5 584V629M595.5 590V613M596.5 586V614M597.5 588V612M598.5 604V616M599.5 586V624M600.5 588V620M601.5 598V622M602.5 582V626M603.5 603V621M604.5 604V629M605.5 595V618M606.5 593V626M607.5 603V638M608.5 593V619M609.5 594V614M610.5 591V627M611.5 599V619M612.5 602V628M613.5 596V629M614.5 595V614M615.5 597V615M616.5 595V617M617.5 605V623M618.5 596V620M619.5 600V617M620.5 605V612M621.5 599V618M622.5 598V619M623.5 599V626M624.5 602V623M625.5 600V620M626.5 601V617M627.5 600V622M630.5 588V620M631.5 582V626M632.5 589V622M633.5 603V624M634.5 602V624M635.5 598V618M636.5 587V624M637.5 597V618M638.5 594V615M639.5 605V627M640.5 603V618M641.5 595V620M642.5 598V617M643.5 599V630M644.5 599V623M645.5 589V627M646.5 600V635M647.5 603V617M648.5 606V623M649.5 589V621M650.5 591V616M651.5 599V622M652.5 605V624M653.5 600V624M654.5 603V622M655.5 602V614M656.5 601V619M657.5 597V620M658.5 605V622M659.5 599V615M660.5 593V619M661.5 597V618M662.5 592V624M663.5 590V634M664.5 587V636M665.5 587V629M666.5 591V632M667.5 594V626M668.5 599V636M669.5 590V615M670.5 603V623M671.5 595V617M672.5 591V623M673.5 604V613M674.5 595V621M675.5 603V613M676.5 603V624M677.5 604V616M678.5 588V619M679.5 586V621M680.5 604V629M681.5 598V618M682.5 601V626M683.5 600V622M684.5 597V619M685.5 591V614M686.5 598V621M687.5 596V626M688.5 603V617M689.5 607V612M690.5 607V612M701.5 597V639M702.5 592V623M703.5 596V622M704.5 605V628M705.5 592V620M706.5 583V626M707.5 582V619M708.5 598V623M709.5 590V620M710.5 604V623M711.5 595V621M712.5 589V624M713.5 604V621M714.5 596V631M715.5 598V613M716.5 604V628M717.5 596V627M718.5 605V628M719.5 596V625M720.5 601V615M721.5 600V619M722.5 601V614M723.5 603V617M724.5 605V620M725.5 599V616M726.5 605V613M727.5 596V614M728.5 605V618M730.5 588V619M731.5 584V634M732.5 583V646M733.5 595V635M734.5 581V642M735.5 601V627M736.5 583V617M737.5 590V620M738.5 597V630M739.5 588V634M740.5 583V624M741.5 592V627M742.5 581V616M743.5 595V619M744.5 593V618M745.5 601V619M746.5 606V613M747.5 605V618M748.5 604V621M749.5 602V619M750.5 601V618M751.5 603V618M752.5 602V618M753.5 601V612M754.5 602V611M755.5 599V621M757.5 593V622M758.5 590V614M759.5 606V620M760.5 595V617M761.5 596V618M762.5 594V616M763.5 595V621M764.5 597V619M765.5 606V625M766.5 603V617M767.5 598V623M768.5 599V617M769.5 605V626M770.5 604V624M771.5 600V623M772.5 591V617M773.5 591V626M774.5 585V624M775.5 592V613M776.5 605V626M777.5 595V615M778.5 589V634M779.5 593V625M780.5 594V629M781.5 591V625M782.5 589V627M783.5 595V633M784.5 591V622M785.5 580V614M786.5 586V628M787.5 587V614M788.5 591V618M789.5 590V640M790.5 595V630M791.5 594V630M792.5 600V632M793.5 592V643M794.5 603V645M795.5 592V636M796.5 589V642M797.5 590V619M798.5 591V630M799.5 599V632M800.5 596V631M801.5 594V632M802.5 595V624M803.5 587V620M804.5 598V617M805.5 586V629M806.5 588V628M807.5 585V621M808.5 597V625M809.5 597V614M810.5 593V621M811.5 590V627M812.5 598V618M813.5 606V626M815.5 604V631M816.5 584V623M817.5 599V646M818.5 597V623M819.5 590V628M820.5 579V613M821.5 583V613M822.5 578V621M823.5 578V630M824.5 592V617M825.5 589V622M826.5 583V624M827.5 595V628M828.5 596V636M829.5 592V638M830.5 601V625M831.5 595V627M832.5 591V622M833.5 585V624M834.5 587V634M835.5 600V616M836.5 595V626M837.5 586V614M838.5 598V617M839.5 592V625M840.5 592V620M841.5 596V612M857.5 599V619M858.5 605V615M859.5 595V616M860.5 590V623M861.5 588V615M862.5 600V639M863.5 603V634M864.5 601V626M865.5 601V614M866.5 588V628M867.5 596V616M868.5 587V636M869.5 586V637M870.5 597V635M871.5 601V616M872.5 594V614M873.5 606V622M874.5 593V614M875.5 605V616M876.5 600V623M877.5 594V622M878.5 601V621M879.5 599V619M880.5 597V617M881.5 602V627M882.5 597V620M883.5 597V626M884.5 603V631M885.5 589V625M886.5 597V634M887.5 596V633M888.5 605V621M889.5 592V632M890.5 597V619M891.5 597V626M892.5 596V618M893.5 603V629M894.5 594V628M895.5 591V623M896.5 584V629M897.5 587V628M898.5 594V615M899.5 589V617M900.5 584V613M901.5 587V631M902.5 601V634M903.5 598V622M904.5 597V634M905.5 598V624M906.5 604V616M907.5 605V615M908.5 596V624M909.5 595V630M910.5 592V626M911.5 599V623M912.5 603V619M913.5 599V625M914.5 591V618M915.5 593V620M916.5 601V621M917.5 598V622M918.5 594V619M919.5 603V621M920.5 595V629M921.5 596V629M922.5 597V623M923.5 601V623M924.5 601V615M925.5 602V622M926.5 597V636M927.5 599V628M928.5 596V625M929.5 602V622M930.5 598V622M931.5 587V626M932.5 594V617M933.5 594V626M934.5 594V623M935.5 588V619M936.5 602V625M937.5 585V621M938.5 594V622M939.5 601V621M940.5 603V617M941.5 596V613M942.5 601V630M943.5 594V632M944.5 605V627M945.5 596V627M946.5 596V612M947.5 594V612M948.5 597V626M949.5 595V612M950.5 593V622M951.5 599V614M952.5 598V619M953.5 596V617M954.5 606V616M955.5 600V616M956.5 602V615M957.5 606V613M959.5 577V647M960.5 597V634M961.5 586V635M962.5 571V630M963.5 575V636M964.5 588V645M965.5 582V621M966.5 592V646M967.5 597V644M968.5 592V617M969.5 588V616M970.5 588V629M971.5 600V623M972.5 605V617M973.5 602V613M974.5 599V618M975.5 600V613M976.5 603V621M977.5 606V619M978.5 598V616M979.5 599V613M980.5 598V617M981.5 607V612" stroke="#9292a0" stroke-width="1" fill="none" shape-rendering="crispEdges"/>
<path d="M365.5 729V775M366.5 724V754M367.5 726V752M368.5 737V764M369.5 723V766M370.5 741V762M371.5 739V751M372.5 727V766M373.5 729V755M374.5 718V760M375.5 733V752M376.5 726V759M377.5 719V749M378.5 721V764M379.5 737V758M380.5 740V760M381.5 741V747M382.5 736V758M383.5 741V750M384.5 742V748M385.5 734V753M386.5 742V755M389.5 736V749M390.5 727V752M391.5 736V754M392.5 728V760M393.5 719V748M394.5 718V754M395.5 726V753M396.5 728V753M397.5 738V755M398.5 735V758M399.5 740V748M400.5 733V759M403.5 723V749M404.5 733V749M405.5 724V759M406.5 714V762M407.5 740V752M408.5 721V749M409.5 731V755M410.5 739V759M411.5 729V763M412.5 733V768M413.5 733V766M414.5 731V761M415.5 739V767M416.5 733V764M417.5 735V753M418.5 740V757M419.5 730V765M420.5 735V757M421.5 740V764M422.5 730V757M423.5 739V763M424.5 725V759M425.5 739V758M426.5 726V750M427.5 734V748M428.5 729V754M429.5 728V747M430.5 732V757M431.5 737V747M432.5 739V755M433.5 742V758M434.5 731V762M435.5 732V754M436.5 740V759M437.5 736V759M438.5 731V756M439.5 729V765M440.5 739V763M441.5 733V765M442.5 725V757M443.5 729V757M444.5 738V759M445.5 733V754M446.5 732V748M447.5 733V750M448.5 734V753M449.5 735V746M450.5 733V755M451.5 732V759M452.5 737V756M453.5 732V759M454.5 734V760M455.5 736V763M456.5 727V762M457.5 728V770M458.5 731V765M459.5 730V763M460.5 723V756M461.5 739V764M462.5 733V752M463.5 725V762M464.5 740V763M465.5 735V751M466.5 740V752M467.5 733V753M468.5 732V749M469.5 730V761M470.5 727V757M471.5 727V753M472.5 737V757M473.5 733V752M474.5 729V759M475.5 731V749M476.5 724V764M477.5 726V761M478.5 741V748M479.5 731V761M480.5 741V767M481.5 732V754M482.5 735V755M483.5 732V756M484.5 731V748M485.5 733V747M486.5 735V761M487.5 733V755M488.5 732V756M489.5 733V753M490.5 730V756M491.5 729V755M492.5 733V752M493.5 741V756M494.5 735V754M495.5 734V755M496.5 731V757M497.5 733V759M498.5 738V748M499.5 740V755M500.5 738V758M503.5 698V773M504.5 703V758M505.5 731V752M506.5 715V768M507.5 715V757M508.5 719V762M509.5 732V757M510.5 735V763M511.5 727V770M512.5 736V757M513.5 728V767M514.5 733V772M515.5 735V765M516.5 742V760M517.5 735V753M518.5 732V758M519.5 728V756M520.5 739V756M521.5 738V755M522.5 735V752M523.5 737V752M524.5 742V748M525.5 737V750M526.5 741V750M527.5 740V746M530.5 735V747M531.5 733V758M532.5 736V761M533.5 728V756M534.5 728V754M535.5 737V748M536.5 729V760M537.5 730V751M538.5 739V762M539.5 734V755M540.5 734V756M541.5 724V758M542.5 732V753M543.5 730V754M544.5 737V753M545.5 740V757M546.5 730V750M547.5 726V750M548.5 729V769M549.5 731V768M550.5 741V769M551.5 737V753M552.5 726V759M553.5 722V757M554.5 720V759M555.5 727V767M556.5 730V765M558.5 723V769M559.5 723V765M560.5 732V769M561.5 732V751M562.5 729V749M563.5 737V759M564.5 738V765M565.5 740V750M566.5 726V767M567.5 737V755M568.5 727V766M569.5 726V770M570.5 723V758M571.5 736V768M572.5 727V765M573.5 728V751M574.5 731V763M575.5 741V754M576.5 728V763M577.5 736V752M578.5 739V762M579.5 741V756M580.5 734V758M581.5 724V755M582.5 724V756M583.5 728V751M584.5 735V748M585.5 733V754M587.5 736V771M588.5 718V755M589.5 724V777M590.5 735V771M591.5 730V761M592.5 735V760M593.5 734V764M594.5 720V765M595.5 725V749M596.5 721V749M597.5 723V748M598.5 740V751M599.5 721V760M600.5 723V755M601.5 733V757M602.5 717V761M603.5 739V756M604.5 739V764M605.5 730V754M606.5 729V761M607.5 739V774M608.5 728V755M609.5 729V750M610.5 727V762M611.5 734V755M612.5 738V763M613.5 732V764M614.5 730V749M615.5 733V751M616.5 730V753M617.5 741V759M618.5 731V756M619.5 735V753M620.5 740V747M621.5 734V754M622.5 734V755M623.5 735V762M624.5 738V759M625.5 735V755M626.5 736V752M627.5 736V757M630.5 723V756M631.5 717V761M632.5 724V757M633.5 738V759M634.5 737V759M635.5 734V753M636.5 723V760M637.5 732V754M638.5 729V750M639.5 740V762M640.5 738V754M641.5 731V756M642.5 734V752M643.5 734V766M644.5 734V758M645.5 725V762M646.5 735V770M647.5 738V752M648.5 741V758M649.5 724V756M650.5 727V752M651.5 734V757M652.5 741V759M653.5 735V759M654.5 738V757M655.5 737V749M656.5 737V754M657.5 733V755M658.5 740V758M659.5 734V751M660.5 729V755M661.5 732V754M662.5 727V759M663.5 725V769M664.5 722V772M665.5 723V765M666.5 726V767M667.5 730V761M668.5 734V771M669.5 725V750M670.5 738V759M671.5 730V753M672.5 727V759M673.5 740V749M674.5 730V757M675.5 738V749M676.5 739V760M677.5 739V752M678.5 723V754M679.5 722V756M680.5 739V765M681.5 734V754M682.5 737V761M683.5 735V758M684.5 732V754M685.5 727V749M686.5 733V756M687.5 732V761M688.5 738V753M689.5 742V747M690.5 742V747M701.5 733V774M702.5 727V758M703.5 731V758M704.5 740V763M705.5 727V755M706.5 718V761M707.5 718V755M708.5 733V758M709.5 725V755M710.5 739V758M711.5 731V757M712.5 725V759M713.5 739V757M714.5 732V767M715.5 734V748M716.5 739V764M717.5 732V763M718.5 740V763M719.5 732V760M720.5 737V750M721.5 736V754M722.5 736V750M723.5 738V752M724.5 740V756M725.5 735V752M726.5 740V748M727.5 732V750M728.5 741V753M730.5 724V754M731.5 719V769M732.5 718V781M733.5 730V770M734.5 717V777M735.5 736V763M736.5 718V752M737.5 725V755M738.5 732V765M739.5 723V770M740.5 718V760M741.5 727V763M742.5 716V751M743.5 731V755M744.5 728V753M745.5 737V754M746.5 742V748M747.5 741V754M748.5 739V756M749.5 737V755M750.5 736V754M751.5 739V754M752.5 738V753M753.5 737V747M754.5 737V746M755.5 735V756M757.5 728V758M758.5 725V750M759.5 742V755M760.5 730V752M761.5 732V753M762.5 730V752M763.5 730V757M764.5 732V754M765.5 742V760M766.5 738V752M767.5 733V758M768.5 734V753M769.5 741V762M770.5 739V759M771.5 735V758M772.5 727V752M773.5 726V762M774.5 720V760M775.5 727V749M776.5 740V761M777.5 730V750M778.5 724V769M779.5 728V760M780.5 730V765M781.5 727V761M782.5 724V763M783.5 731V768M784.5 727V757M785.5 715V750M786.5 722V763M787.5 722V749M788.5 727V753M789.5 726V776M790.5 730V765M791.5 729V766M792.5 736V767M793.5 727V778M794.5 738V780M795.5 727V772M796.5 724V778M797.5 725V755M798.5 726V765M799.5 734V767M800.5 731V766M801.5 729V767M802.5 730V759M803.5 722V755M804.5 733V752M805.5 721V765M806.5 723V763M807.5 721V757M808.5 732V761M809.5 732V749M810.5 728V757M811.5 726V763M812.5 734V753M813.5 742V761M815.5 739V767M816.5 719V759M817.5 734V781M818.5 732V758M819.5 725V763M820.5 714V748M821.5 718V748M822.5 713V756M823.5 713V766M824.5 728V753M825.5 725V758M826.5 719V759M827.5 730V763M828.5 731V771M829.5 727V774M830.5 736V761M831.5 730V762M832.5 727V757M833.5 720V760M834.5 723V769M835.5 735V751M836.5 731V762M837.5 721V750M838.5 733V752M839.5 727V760M840.5 727V756M841.5 732V747M857.5 734V754M858.5 740V750M859.5 730V751M860.5 725V758M861.5 724V751M862.5 736V775M863.5 739V770M864.5 736V761M865.5 737V749M866.5 723V764M867.5 731V751M868.5 722V771M869.5 721V772M870.5 732V770M871.5 736V751M872.5 730V749M873.5 741V757M874.5 728V749M875.5 740V752M876.5 735V759M877.5 729V757M878.5 736V756M879.5 735V754M880.5 733V752M881.5 737V762M882.5 733V755M883.5 732V762M884.5 738V767M885.5 724V761M886.5 733V769M887.5 731V769M888.5 740V757M889.5 727V767M890.5 733V754M891.5 732V761M892.5 731V753M893.5 739V764M894.5 729V763M895.5 727V758M896.5 720V764M897.5 723V763M898.5 730V750M899.5 724V753M900.5 719V748M901.5 723V767M902.5 736V770M903.5 734V757M904.5 732V770M905.5 733V760M906.5 739V751M907.5 741V750M908.5 731V760M909.5 731V765M910.5 728V761M911.5 734V758M912.5 739V755M913.5 735V760M914.5 726V753M915.5 729V755M916.5 736V756M917.5 733V757M918.5 729V754M919.5 739V756M920.5 730V764M921.5 731V764M922.5 733V758M923.5 737V758M924.5 736V750M925.5 737V758M926.5 733V771M927.5 734V764M928.5 731V760M929.5 737V757M930.5 733V757M931.5 723V761M932.5 730V753M933.5 730V761M934.5 729V759M935.5 724V754M936.5 737V761M937.5 720V757M938.5 729V758M939.5 736V756M940.5 738V753M941.5 732V748M942.5 737V765M943.5 729V767M944.5 740V762M945.5 732V762M946.5 731V748M947.5 730V747M948.5 732V761M949.5 730V748M950.5 728V758M951.5 735V749M952.5 734V754M953.5 732V753M954.5 742V752M955.5 735V752M956.5 738V751M957.5 742V749M959.5 712V783M960.5 732V769M961.5 721V771M962.5 707V765M963.5 710V771M964.5 723V780M965.5 717V756M966.5 727V782M967.5 732V779M968.5 727V753M969.5 723V751M970.5 723V765M971.5 735V758M972.5 741V752M973.5 737V748M974.5 735V753M975.5 735V749M976.5 738V756M977.5 742V754M978.5 733V752M979.5 734V749M980.5 733V752M981.5 742V748" stroke="#9292a0" stroke-width="1" fill="none" shape-rendering="crispEdges"/>
<rect x="364.7" y="520.8" width="22.8" height="20.2" fill="#486eba"/>
<rect x="388" y="520.8" width="13.5" height="20.2" fill="#486eba"/>
<rect x="402" y="520.8" width="99.5" height="20.2" fill="#486eba"/>
<rect x="502" y="520.8" width="26.5" height="20.2" fill="#486eba"/>
<rect x="529" y="520.8" width="28" height="20.2" fill="#486eba"/>
<rect x="557.5" y="520.8" width="28.5" height="20.2" fill="#486eba"/>
<rect x="586.5" y="520.8" width="42" height="20.2" fill="#242424"/>
<rect x="629" y="520.8" width="62" height="20.2" fill="#486eba"/>
<rect x="691.5" y="520.8" width="8.5" height="20.2" fill="#486eba"/>
<rect x="700.5" y="520.8" width="28.5" height="20.2" fill="#486eba"/>
<rect x="729.5" y="520.8" width="26.5" height="20.2" fill="#486eba"/>
<rect x="756.5" y="520.8" width="57.5" height="20.2" fill="#486eba"/>
<rect x="814.5" y="520.8" width="27.5" height="20.2" fill="#486eba"/>
<rect x="842.5" y="520.8" width="13.5" height="20.2" fill="#486eba"/>
<rect x="856.5" y="520.8" width="101.5" height="20.2" fill="#486eba"/>
<rect x="958.5" y="520.8" width="23.5" height="20.2" fill="#486eba"/>
<rect x="387.1" y="520.8" width="1.2" height="317.2" fill="#222"/>
<rect x="401.1" y="520.8" width="1.2" height="317.2" fill="#222"/>
<rect x="501.1" y="520.8" width="1.2" height="317.2" fill="#0c0c0c"/>
<rect x="528.1" y="520.8" width="1.2" height="317.2" fill="#222"/>
<rect x="556.6" y="520.8" width="1.2" height="317.2" fill="#222"/>
<rect x="585.6" y="520.8" width="1.2" height="317.2" fill="#0c0c0c"/>
<rect x="628.1" y="520.8" width="1.2" height="317.2" fill="#222"/>
<rect x="690.6" y="520.8" width="1.2" height="317.2" fill="#222"/>
<rect x="699.6" y="520.8" width="1.2" height="317.2" fill="#222"/>
<rect x="728.6" y="520.8" width="1.2" height="317.2" fill="#222"/>
<rect x="755.6" y="520.8" width="1.2" height="317.2" fill="#222"/>
<rect x="813.6" y="520.8" width="1.2" height="317.2" fill="#222"/>
<rect x="841.6" y="520.8" width="1.2" height="317.2" fill="#222"/>
<rect x="855.6" y="520.8" width="1.2" height="317.2" fill="#222"/>
<rect x="957.6" y="520.8" width="1.2" height="317.2" fill="#222"/>
<rect x="628.2" y="520.8" width="1.3" height="317.2" fill="#141414"/>
<rect x="361.3" y="811.500" width="620.7" height="1.500" fill="#141414"/>
</g>
<g clip-path="url(#lane)"><path d="M367.4 412.2 L412.4 451.2 L438.6 452.6 L465.7 453.7 C467.2 452.8 471.6 450.6 474.6 448.1 C477.6 445.6 481.4 442.0 483.9 438.6 C486.4 435.2 487.9 431.4 489.5 427.7 C491.1 424.0 492.1 420.6 493.2 416.5 C494.3 412.4 495.4 407.6 496.3 402.9 C497.2 398.1 498.1 392.9 498.8 388.0 C499.5 383.1 500.0 377.7 500.4 373.2 C500.8 368.7 501.1 364.7 501.4 360.8 C501.6 356.9 501.8 351.5 501.9 349.6 M504.6 346.6 L546.1 354.1 C547.6 354.7 552.2 356.0 555.2 357.6 C558.2 359.2 561.3 361.6 564.0 364.0 C566.7 366.4 568.9 368.8 571.2 372.0 C573.5 375.2 575.8 379.5 577.6 383.2 C579.5 386.9 581.0 390.3 582.3 394.3 C583.6 398.3 584.6 402.8 585.5 407.1 C586.4 411.4 586.9 415.1 587.5 419.9 C588.1 424.7 588.7 430.6 589.1 435.9 C589.5 441.2 589.7 446.6 590.0 451.9 C590.3 457.2 590.6 462.6 590.8 467.9 C591.0 473.2 591.2 479.7 591.3 483.8 C591.4 487.9 591.4 491.1 591.4 492.5 C593.5 491.8 599.5 490.1 604.0 488.0 C608.5 485.9 614.6 483.0 618.6 480.2 C622.6 477.4 625.2 474.2 628.0 471.2 C630.8 468.2 633.1 465.3 635.2 462.2 C637.3 459.1 639.1 455.8 640.6 452.6 C642.1 449.4 643.3 445.8 644.2 443.0 C645.1 440.2 645.5 437.2 645.8 436.0 C646.6 437.4 648.8 441.4 650.8 444.2 C652.8 447.0 655.6 450.1 658.0 452.6 C660.4 455.1 662.8 457.3 665.2 459.2 C667.6 461.1 669.6 462.2 672.4 464.0 C675.2 465.8 679.0 468.3 682.0 470.0 C685.0 471.7 687.5 472.8 690.4 474.2 C693.3 475.6 698.1 477.7 699.6 478.4 C703.0 478.6 712.6 479.2 720.0 479.8 C727.4 480.4 738.5 481.3 743.8 482.0 C749.1 482.7 749.1 483.1 752.0 484.0 C754.9 484.9 758.0 486.1 761.0 487.5 C764.0 488.9 767.3 490.8 770.0 492.5 C772.7 494.2 775.0 496.2 777.0 498.0 C779.0 499.8 780.6 501.7 782.0 503.5 C783.4 505.3 784.5 507.1 785.5 509.0 C786.5 510.9 787.4 513.3 788.0 515.0 C788.6 516.7 789.1 518.3 789.3 519.0 L815.4 436 L842.4 352.4 L878.6 384 L915 415 L941.6 433 L969 451 L982 444" fill="none" stroke="#a0a0a0" stroke-width="1.150"/></g>
<rect x="409.6" y="448.4" width="5.600" height="5.600" fill="#a4a4a4"/>
<rect x="462.9" y="450.9" width="5.600" height="5.600" fill="#a4a4a4"/>
<rect x="588.6" y="489.7" width="5.600" height="5.600" fill="#a4a4a4"/>
<rect x="643.0" y="433.2" width="5.600" height="5.600" fill="#a4a4a4"/>
<rect x="696.8" y="475.6" width="5.600" height="5.600" fill="#a4a4a4"/>
<rect x="839.6" y="349.6" width="5.600" height="5.600" fill="#a4a4a4"/>
<rect x="912.2" y="412.2" width="5.600" height="5.600" fill="#a4a4a4"/>
<rect x="966.2" y="448.2" width="5.600" height="5.600" fill="#a4a4a4"/>
<rect x="787.200" y="516.800" width="4.400" height="4.200" fill="#a4a4a4"/>
<rect x="499.400" y="340.600" width="2.200" height="8.600" fill="#b4b4b4"/><rect x="502.500" y="340.600" width="2.200" height="8.600" fill="#b4b4b4"/>
<circle cx="367.4" cy="412.2" r="2.500" fill="#444" stroke="#c4c4c4" stroke-width="1.100"/>
<circle cx="438.6" cy="452.6" r="2.500" fill="#444" stroke="#c4c4c4" stroke-width="1.100"/>
<circle cx="483.9" cy="438.6" r="2.500" fill="#444" stroke="#c4c4c4" stroke-width="1.100"/>
<circle cx="546.1" cy="354.1" r="2.500" fill="#444" stroke="#c4c4c4" stroke-width="1.100"/>
<circle cx="618.6" cy="480.2" r="2.500" fill="#444" stroke="#c4c4c4" stroke-width="1.100"/>
<circle cx="672.4" cy="464.0" r="2.500" fill="#444" stroke="#c4c4c4" stroke-width="1.100"/>
<circle cx="743.8" cy="482.0" r="2.500" fill="#444" stroke="#c4c4c4" stroke-width="1.100"/>
<circle cx="815.4" cy="436.0" r="2.500" fill="#444" stroke="#c4c4c4" stroke-width="1.100"/>
<circle cx="878.6" cy="384.0" r="2.500" fill="#444" stroke="#c4c4c4" stroke-width="1.100"/>
<circle cx="941.6" cy="433.0" r="2.500" fill="#444" stroke="#c4c4c4" stroke-width="1.100"/>
<rect x="429.9" y="312.500" width="1" height="5" fill="#8a8a8a"/>
<rect x="573.7" y="312.500" width="1" height="5" fill="#8a8a8a"/>
<rect x="645.6" y="312.500" width="1" height="5" fill="#8a8a8a"/>
<rect x="717.6" y="312.500" width="1" height="5" fill="#8a8a8a"/>
<rect x="861.4" y="312.500" width="1" height="5" fill="#8a8a8a"/>
<rect x="933.3" y="312.500" width="1" height="5" fill="#8a8a8a"/>
<path d="M247.800 511.500h5M250.300 509v5" stroke="#1e1e1e" stroke-width="1.300"/>
<g stroke="#f0f0f0" stroke-width="1.200" fill="#555"><path d="M265 514l5-5"/><rect x="262.800" y="512.500" width="3" height="3"/><rect x="268.500" y="506.800" width="3" height="3"/></g>
<path d="M280 511.500h9" stroke="#1e1e1e" stroke-width="1.500"/>
<path d="M245.300 530h7.400l-3.700 4.200z" fill="#a8a8a8"/>
<path d="M248 802.500h5M250.500 800v5" stroke="#161616" stroke-width="1.200"/>
<g stroke="#f0f0f0" stroke-width="1.300" fill="#2b2b2b"><path d="M265 805l5-5.500"/><rect x="262.800" y="803.500" width="3.200" height="3.200"/><rect x="268.800" y="797.800" width="3.200" height="3.200"/></g>
<path d="M279.500 799h9.500M279.500 802.200h9.500M279.500 805.400h9.500" stroke="#161616" stroke-width="1.300"/>
<path d="M986 336.200l3.800-3.900 3.800 3.900z" fill="#b8b8b8"/><path d="M986 829l3.800 4 3.800-4z" fill="#b4b4b4"/>
<path d="M375 842.500l-4.500 4.200 4.500 4.200z" fill="#8c8c8c"/><path d="M973.800 842.500l4.500 4.200-4.500 4.200z" fill="#8c8c8c"/>
<path d="M986 853l9-9M990 853l5-5" stroke="#9a9a9a" stroke-width="1.200"/></svg>
<div style="left:364.7px;top:522px;width:21.8px;height:19px;overflow:hidden"><span class="t" style="left:3.5px;top:3.800px;font-size:10.100px;color:#fff">20_t</span></div>
<div style="left:402px;top:522px;width:98.5px;height:19px;overflow:hidden"><span class="t" style="left:2.5px;top:3.800px;font-size:10.100px;color:#fff">120_tectonic-massive</span></div>
<div style="left:502px;top:522px;width:25.5px;height:19px;overflow:hidden"><span class="t" style="left:2.5px;top:3.800px;font-size:10.100px;color:#fff">120_t</span></div>
<div style="left:529px;top:522px;width:27px;height:19px;overflow:hidden"><span class="t" style="left:2.5px;top:3.800px;font-size:10.100px;color:#fff">120_t</span></div>
<div style="left:557.5px;top:522px;width:27.5px;height:19px;overflow:hidden"><span class="t" style="left:2.5px;top:3.800px;font-size:10.100px;color:#fff">120_t</span></div>
<div style="left:586.5px;top:522px;width:41px;height:19px;overflow:hidden"><span class="t" style="left:2.5px;top:3.800px;font-size:10.100px;color:#ef8a1c">120_tect</span></div>
<div style="left:629px;top:522px;width:61px;height:19px;overflow:hidden"><span class="t" style="left:2.5px;top:3.800px;font-size:10.100px;color:#fff">120_tectonic</span></div>
<div style="left:700.5px;top:522px;width:27.5px;height:19px;overflow:hidden"><span class="t" style="left:2.5px;top:3.800px;font-size:10.100px;color:#fff">120_t</span></div>
<div style="left:729.5px;top:522px;width:25.5px;height:19px;overflow:hidden"><span class="t" style="left:2.5px;top:3.800px;font-size:10.100px;color:#fff">120_t</span></div>
<div style="left:756.5px;top:522px;width:56.5px;height:19px;overflow:hidden"><span class="t" style="left:2.5px;top:3.800px;font-size:10.100px;color:#fff">120_tectonic</span></div>
<div style="left:814.5px;top:522px;width:26.5px;height:19px;overflow:hidden"><span class="t" style="left:2.5px;top:3.800px;font-size:10.100px;color:#fff">120_t</span></div>
<div style="left:856.5px;top:522px;width:100.5px;height:19px;overflow:hidden"><span class="t" style="left:2.5px;top:3.800px;font-size:10.100px;color:#fff">120_tectonic-massive</span></div>
<div style="left:958.5px;top:522px;width:22.5px;height:19px;overflow:hidden"><span class="t" style="left:2.5px;top:3.800px;font-size:10.100px;color:#fff">120_t</span></div>
</div></body></html>
